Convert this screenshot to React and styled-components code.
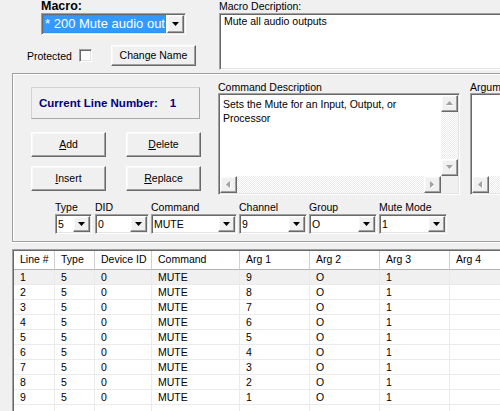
import React from 'react';
import styled, { createGlobalStyle } from 'styled-components';

const GlobalStyle = createGlobalStyle`
  html, body {
    margin: 0;
    padding: 0;
    background: #f0f0f0;
  }
  body {
    font-family: "Liberation Sans", Arial, sans-serif;
    font-size: 10.5px;
    color: #000;
    overflow: hidden;
  }
  * {
    box-sizing: border-box;
  }
`;

const sunken = `
  border: 1px solid;
  border-color: #a0a0a0 #ffffff #ffffff #a0a0a0;
  box-shadow: inset 1px 1px 0 #696969, inset -1px -1px 0 #e3e3e3;
`;

const raised = `
  border: 1px solid;
  border-color: #ffffff #696969 #696969 #ffffff;
  box-shadow: inset -1px -1px 0 #a0a0a0, inset 1px 1px 0 #f8f8f8;
  background: #f0f0f0;
`;

const Window = styled.div`
  width: 500px;
  height: 411px;
  overflow: hidden;
  display: flex;
  flex-direction: column;
`;

/* ---------- top: macro picker + description ---------- */

const Top = styled.div`
  display: flex;
  height: 73px;
  flex-shrink: 0;
`;

const MacroPicker = styled.div`
  width: 219px;
  flex-shrink: 0;
`;

const MacroLabel = styled.div`
  margin-left: 41px;
  font-size: 12.5px;
  font-weight: bold;
  line-height: 13px;
  height: 13px;
`;

const MacroCombo = styled.div`
  ${sunken}
  margin-left: 41px;
  width: 145px;
  height: 22px;
  padding: 1px;
  display: flex;
  gap: 1px;
  background: #fff;
`;

const SelectedText = styled.div`
  flex: 1;
  min-width: 0;
  background: #3399ff;
  color: #fff;
  font-size: 13px;
  line-height: 16px;
  padding-left: 1px;
  border: 1px dotted #cc6600;
  white-space: nowrap;
  overflow: hidden;
`;

const DropButton = styled.div`
  ${raised}
  width: 17px;
  flex-shrink: 0;
  display: flex;
  align-items: center;
  justify-content: center;
`;

const ProtectRow = styled.div`
  display: flex;
  align-items: center;
  margin-top: 10px;
  padding-left: 27px;
  height: 21px;
`;

const CheckBox = styled.div`
  ${sunken}
  width: 13px;
  height: 13px;
  margin-left: 7px;
  background: #fff;
`;

const Button = styled.div`
  ${raised}
  width: ${(p) => p.$w || 75}px;
  height: ${(p) => p.$h || 25}px;
  margin-left: ${(p) => p.$ml || 0}px;
  display: flex;
  align-items: center;
  justify-content: center;
  line-height: 12px;
  padding-bottom: 1px;
`;

const Description = styled.div`
  flex: 1;
`;

const FieldLabel = styled.div`
  line-height: ${(p) => p.$lh || 13}px;
  padding-top: ${(p) => p.$pt || 0}px;
  white-space: nowrap;
`;

const TextBox = styled.div`
  ${sunken}
  width: 300px;
  height: 57px;
  background: #fff;
  padding: 1px 4px;
  line-height: 13px;
`;

/* ---------- middle panel ---------- */

const Panel = styled.div`
  margin-left: 12px;
  width: 520px;
  height: 169px;
  flex-shrink: 0;
  border: 1px solid #a0a0a0;
  box-shadow: inset 1px 1px 0 #fff, 0 1px 0 #fff;
  display: flex;
  flex-direction: column;
`;

const UpperRow = styled.div`
  display: flex;
  height: 121px;
`;

const ControlColumn = styled.div`
  margin-left: 18px;
  padding-top: 13px;
  width: 170px;
  flex-shrink: 0;
`;

const LineBox = styled.div`
  width: 169px;
  height: 32px;
  border: 1px solid;
  border-color: #d2d2d2 #a8a8a8 #a8a8a8 #d2d2d2;
  display: flex;
  align-items: center;
  padding-left: 7px;
  color: #000080;
  font-weight: bold;
  font-size: 11.5px;
`;

const LineNumber = styled.span`
  margin-left: 12px;
`;

const ButtonGrid = styled.div`
  margin-top: 13px;
  display: grid;
  grid-template-columns: 75px 75px;
  grid-auto-rows: 25px;
  column-gap: 20px;
  row-gap: 9px;
`;

const DescBlock = styled.div`
  margin-left: ${(p) => p.$ml}px;
  width: ${(p) => p.$w}px;
  flex-shrink: 0;
`;

const ScrollField = styled.div`
  ${sunken}
  height: 102px;
  padding: 1px;
  background: #fff;
  display: grid;
  grid-template-columns: 1fr 17px;
  grid-template-rows: 1fr 17px;
`;

const DescText = styled.div`
  padding: 2px 3px;
  line-height: 14px;
`;

const VScroll = styled.div`
  display: flex;
  flex-direction: column;
`;

const HScroll = styled.div`
  display: flex;
`;

const Track = styled.div`
  flex: 1;
  background: repeating-conic-gradient(#ffffff 0 25%, #ebebeb 0 50%) 0 0 / 2px 2px;
`;

const ScrollButton = styled.div`
  ${raised}
  width: 17px;
  height: 17px;
  flex-shrink: 0;
  display: flex;
  align-items: center;
  justify-content: center;
`;

const Corner = styled.div`
  background: #f0f0f0;
`;

const ComboRow = styled.div`
  display: flex;
  padding: 5px 0 0 42px;
`;

const ComboField = styled.div`
  width: ${(p) => p.$w}px;
  flex-shrink: 0;
`;

const Combo = styled.div`
  ${sunken}
  width: ${(p) => p.$w}px;
  height: 20px;
  padding: 1px;
  display: flex;
  background: #fff;
`;

const ComboValue = styled.div`
  flex: 1;
  padding-left: 1px;
  line-height: 16px;
  white-space: nowrap;
  overflow: hidden;
`;

/* ---------- grid ---------- */

const GridWrap = styled.div`
  margin: 7px 0 0 12px;
  width: 520px;
  flex: 1;
  border-top: 1px solid #a0a0a0;
  border-left: 1px solid #a0a0a0;
  box-shadow: inset 1px 1px 0 #696969;
  padding: 1px 0 0 1px;
  background: #fff;
  overflow: hidden;
`;

const COLS = '41px 40px 57px 88px 70px 70px 70px 70px';

const GridRow = styled.div`
  display: grid;
  grid-template-columns: ${COLS};
  background: ${(p) => (p.$selected ? '#f0f0f0' : '#fff')};
`;

const HeadCell = styled.div`
  height: 19px;
  line-height: 17px;
  padding-left: 6px;
  border-right: 1px solid #d0d0d0;
  border-bottom: 1px solid #b4b4b4;
  white-space: nowrap;
  overflow: hidden;
`;

const Cell = styled.div`
  height: 15px;
  line-height: 14px;
  padding-left: 6px;
  border-right: 1px solid #ebebeb;
  border-bottom: 1px solid #ebebeb;
  white-space: nowrap;
  overflow: hidden;
`;

/* ---------- small drawings ---------- */

const DownArrow = () => (
  <svg width="7" height="4" viewBox="0 0 7 4">
    <polygon points="0,0 7,0 3.5,4" fill="#000" />
  </svg>
);

const ScrollArrow = ({ dir }) => {
  const pts = {
    up: '0,4 7,4 3.5,0',
    down: '0,0 7,0 3.5,4',
    left: '4,0 4,7 0,3.5',
    right: '0,0 0,7 4,3.5',
  }[dir];
  const vertical = dir === 'up' || dir === 'down';
  const w = vertical ? 8 : 5;
  const h = vertical ? 5 : 8;
  return (
    <svg width={w} height={h} viewBox={`0 0 ${w} ${h}`}>
      <polygon points={pts} fill="#fff" transform="translate(1,1)" />
      <polygon points={pts} fill="#a0a0a0" />
    </svg>
  );
};

const ScrollArea = ({ children }) => (
  <ScrollField>
    <DescText>{children}</DescText>
    <VScroll>
      <ScrollButton><ScrollArrow dir="up" /></ScrollButton>
      <Track />
      <ScrollButton><ScrollArrow dir="down" /></ScrollButton>
    </VScroll>
    <HScroll>
      <ScrollButton><ScrollArrow dir="left" /></ScrollButton>
      <Track />
      <ScrollButton><ScrollArrow dir="right" /></ScrollButton>
    </HScroll>
    <Corner />
  </ScrollField>
);

const combos = [
  { label: 'Type', value: '5', w: 40, cw: 37 },
  { label: 'DID', value: '0', w: 56, cw: 54 },
  { label: 'Command', value: 'MUTE', w: 88, cw: 86 },
  { label: 'Channel', value: '9', w: 70, cw: 68 },
  { label: 'Group', value: 'O', w: 70, cw: 68 },
  { label: 'Mute Mode', value: '1', w: 70, cw: 68 },
];

const headers = ['Line #', 'Type', 'Device ID', 'Command', 'Arg 1', 'Arg 2', 'Arg 3', 'Arg 4'];

const rows = Array.from({ length: 9 }, (_, i) => [
  String(i + 1), '5', '0', 'MUTE', String(9 - i), 'O', '1', '',
]);

export default function App() {
  return (
    <>
      <GlobalStyle />
      <Window>
        <Top>
          <MacroPicker>
            <MacroLabel>Macro:</MacroLabel>
            <MacroCombo>
              <SelectedText>* 200 Mute audio out</SelectedText>
              <DropButton><DownArrow /></DropButton>
            </MacroCombo>
            <ProtectRow>
              <span>Protected</span>
              <CheckBox />
              <Button $w={85} $h={21} $ml={19}>Change Name</Button>
            </ProtectRow>
          </MacroPicker>
          <Description>
            <FieldLabel>Macro Decription:</FieldLabel>
            <TextBox>Mute all audio outputs</TextBox>
          </Description>
        </Top>

        <Panel>
          <UpperRow>
            <ControlColumn>
              <LineBox>
                Current Line Number:<LineNumber>1</LineNumber>
              </LineBox>
              <ButtonGrid>
                <Button><span><u>A</u>dd</span></Button>
                <Button><span><u>D</u>elete</span></Button>
                <Button><span><u>I</u>nsert</span></Button>
                <Button><span><u>R</u>eplace</span></Button>
              </ButtonGrid>
            </ControlColumn>
            <DescBlock $ml={17} $w={242}>
              <FieldLabel $pt={7} $lh={12}>Command Description</FieldLabel>
              <ScrollArea>Sets the Mute for an Input, Output, or Processor</ScrollArea>
            </DescBlock>
            <DescBlock $ml={10} $w={200}>
              <FieldLabel $pt={7} $lh={12}>Arguments</FieldLabel>
              <ScrollArea />
            </DescBlock>
          </UpperRow>
          <ComboRow>
            {combos.map((c) => (
              <ComboField key={c.label} $w={c.w}>
                <FieldLabel $lh={14}>{c.label}</FieldLabel>
                <Combo $w={c.cw}>
                  <ComboValue>{c.value}</ComboValue>
                  <DropButton><DownArrow /></DropButton>
                </Combo>
              </ComboField>
            ))}
          </ComboRow>
        </Panel>

        <GridWrap>
          <GridRow>
            {headers.map((h) => (
              <HeadCell key={h}>{h}</HeadCell>
            ))}
          </GridRow>
          {rows.map((r, i) => (
            <GridRow key={i} $selected={i === 0}>
              {r.map((v, j) => (
                <Cell key={j}>{v}</Cell>
              ))}
            </GridRow>
          ))}
          <GridRow>
            {headers.map((h) => (
              <Cell key={h} />
            ))}
          </GridRow>
        </GridWrap>
      </Window>
    </>
  );
}
